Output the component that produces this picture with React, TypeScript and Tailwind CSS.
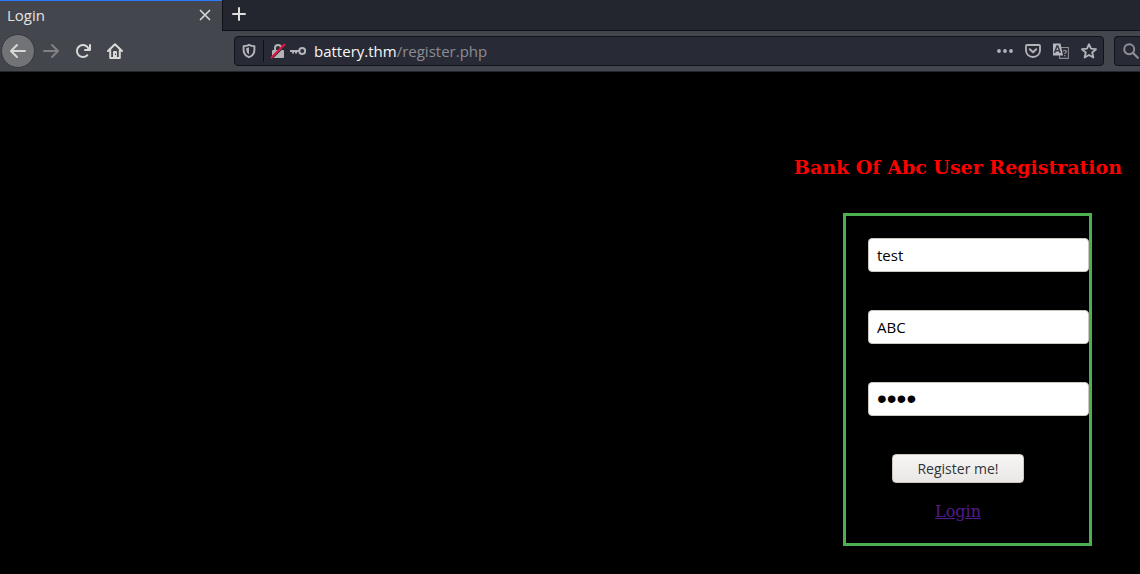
import type { ReactNode } from 'react';

function Icon({ children, className = '' }: { children: ReactNode; className?: string }) {
  return (
    <svg viewBox="0 0 16 16" className={`size-4 shrink-0 ${className}`} fill="currentColor" aria-hidden="true">
      {children}
    </svg>
  );
}

const ARROW_PATH =
  'M15 7H3.414l4.293-4.293a1 1 0 0 0-1.414-1.414l-6 6a1 1 0 0 0 0 1.414l6 6a1 1 0 0 0 1.414-1.414L3.414 9H15a1 1 0 0 0 0-2z';

function TabStrip() {
  return (
    <div className="flex h-[31px] bg-[#23252f]">
      <div className="flex w-[222px] shrink-0 items-center justify-between border-t border-[#2a7bff] bg-[#43464d] pr-[9px] pb-0.5 pl-[7px]">
        <span className="text-[15px] leading-5 text-[#e4e4e2]">Login</span>
        <button type="button" aria-label="Close tab" className="text-[#d6d6d4]">
          <Icon>
            <path d="M3.500 3.500l9 9M12.500 3.500l-9 9" stroke="currentColor" strokeWidth="1.700" strokeLinecap="round" />
          </Icon>
        </button>
      </div>
      <div className="flex flex-1 items-center border-b border-l border-[#111219] pb-0.5 pl-2">
        <button type="button" aria-label="New tab" className="text-[#dededc]">
          <Icon>
            <path d="M8 2v12M2 8h12" stroke="currentColor" strokeWidth="2" strokeLinecap="round" />
          </Icon>
        </button>
      </div>
    </div>
  );
}

function Toolbar() {
  return (
    <div className="flex h-[41px] items-center overflow-hidden border-b border-[#24262b] bg-[#43464d] pl-px text-[#d8d8d6]">
      <button
        type="button"
        aria-label="Back"
        className="grid size-[34px] shrink-0 place-items-center rounded-full border border-[#36383e] bg-[#727376]"
      >
        <Icon>
          <path d={ARROW_PATH} />
        </Icon>
      </button>
      <button type="button" aria-label="Forward" disabled className="grid size-8 shrink-0 place-items-center text-[#808185]">
        <Icon className="rotate-180">
          <path d={ARROW_PATH} />
        </Icon>
      </button>
      <button type="button" aria-label="Reload" className="grid size-8 shrink-0 place-items-center">
        <Icon>
          <path d="M15 1a1 1 0 0 0-1 1v2.418A6.995 6.995 0 1 0 8 15a6.954 6.954 0 0 0 4.950-2.050 1 1 0 0 0-1.414-1.414A5.019 5.019 0 1 1 12.549 6H10a1 1 0 0 0 0 2h5a1 1 0 0 0 1-1V2a1 1 0 0 0-1-1z" />
        </Icon>
      </button>
      <button type="button" aria-label="Home" className="grid size-8 shrink-0 place-items-center">
        <Icon>
          <path d="M1 8L8 1.200 15 8M3.200 7v7.900h9.600V7" fill="none" stroke="currentColor" strokeWidth="2" strokeLinecap="round" strokeLinejoin="round" />
          <path fillRule="evenodd" d="M6 15V9a1 1 0 0 1 1-1h2a1 1 0 0 1 1 1v6zM8 10.500v1.500h1v-1.500z" />
        </Icon>
      </button>

      <div className="ml-[103px] flex h-[30px] min-w-0 flex-1 items-center rounded border border-[#12131a] bg-[#282a36] text-[#b3b4b8]">
        <div className="flex h-[22px] items-center border-r border-[#0f1016] px-1.5">
          <Icon>
            <path
              fill="none"
              stroke="currentColor"
              strokeWidth="1.900"
              strokeLinejoin="round"
              d="M8 1.800c1.800 1 3.500 1.300 5.400 1.300v4c0 3.200-2 5.800-5.400 7.100-3.400-1.300-5.400-3.900-5.400-7.100v-4c1.900 0 3.600-.3 5.400-1.300z"
            />
            <path d="M8 4.300v7.200C6.200 10.300 5.300 8.800 5.300 7V5.100C6.300 5 7.200 4.700 8 4.300z" />
          </Icon>
        </div>
        <Icon className="ml-1.5">
          <path fillRule="evenodd" d="M3 7h1V5a4 4 0 0 1 8 0v2h1a1 1 0 0 1 1 1v6a1 1 0 0 1-1 1H3a1 1 0 0 1-1-1V8a1 1 0 0 1 1-1zm3 0h4V5a2 2 0 0 0-4 0z" />
          <path d="M2.300 15.300l13-13" stroke="#282a36" strokeWidth="1.400" />
          <path d="M1.500 14.500l13-13" stroke="#e8123f" strokeWidth="2" strokeLinecap="round" />
        </Icon>
        <Icon className="ml-1">
          <circle cx="12.200" cy="8" r="2.900" fill="none" stroke="currentColor" strokeWidth="2" />
          <path d="M9.500 7H.7a.7.7 0 0 0-.7.7V9h2v1.500h2V9h1v1.500h2V9h2.500z" />
        </Icon>
        <div className="relative ml-2 h-6 min-w-0 flex-1 text-[15px] leading-6">
          <input
            aria-label="Address"
            defaultValue="battery.thm/register.php"
            className="absolute inset-0 size-full bg-transparent text-transparent outline-none"
          />
          <span aria-hidden="true" className="pointer-events-none relative text-[#8c8d93]">
            <span className="text-[#f8f8f4]">battery.thm</span>/register.php
          </span>
        </div>
        <div className="flex items-center gap-3 pr-1.5">
          <button type="button" aria-label="Page actions">
            <Icon>
              <circle cx="2" cy="8" r="1.900" />
              <circle cx="8" cy="8" r="1.900" />
              <circle cx="14" cy="8" r="1.900" />
            </Icon>
          </button>
          <button type="button" aria-label="Save to Pocket">
            <Icon>
              <path
                d="M2 2h12a1 1 0 0 1 1 1v4.500a7 6.500 0 0 1-14 0V3a1 1 0 0 1 1-1z"
                fill="none"
                stroke="currentColor"
                strokeWidth="1.800"
              />
              <path d="M4.800 6.300L8 9.300l3.200-3" fill="none" stroke="currentColor" strokeWidth="2" strokeLinecap="round" strokeLinejoin="round" />
            </Icon>
          </button>
          <button type="button" aria-label="Translate this page">
            <Icon>
              <path d="M8 4.500h7.400v10.900H6.500V12" fill="none" stroke="#8b8c91" strokeWidth="1.100" />
              <path d="M10.300 8.300c.3-1.300 3-1.300 3 .2 0 1.200-1.500 1.200-1.500 2.500M11.800 12v1.200" fill="none" stroke="#8b8c91" strokeWidth="1.400" />
              <path d="M0 .5h7.500L10 12.500H0z" fill="#b8b9bc" />
              <path d="M1.500 10L4 3h.8l2.500 7M2.500 7.700h4" fill="none" stroke="#383a45" strokeWidth="1.500" />
            </Icon>
          </button>
          <button type="button" aria-label="Bookmark this page">
            <Icon>
              <path
                d="M8 1.200l2 4.500 5 .5-3.800 3.300 1.200 5L8 11.900l-4.400 2.600 1.200-5L1 6.200l5-.5z"
                fill="none"
                stroke="currentColor"
                strokeWidth="1.800"
                strokeLinejoin="round"
              />
            </Icon>
          </button>
        </div>
      </div>
      <div className="ml-2.5 flex h-[30px] w-[26px] shrink-0 items-center rounded-l border border-r-0 border-[#12131a] bg-[#282a36] pl-2 text-[#8f9095]">
        <button type="button" aria-label="Search">
          <Icon>
            <circle cx="6.200" cy="6.200" r="5" fill="none" stroke="currentColor" strokeWidth="1.900" />
            <path d="M9.800 9.800l5 5" stroke="currentColor" strokeWidth="2.200" strokeLinecap="round" />
          </Icon>
        </button>
      </div>
    </div>
  );
}

const fields = [
  { label: 'Username', type: 'text', value: 'test', font: 'text-[15px]' },
  { label: 'Bank name', type: 'text', value: 'ABC', font: 'text-[15px]' },
  { label: 'Password', type: 'password', value: 'pass', font: "font-['Liberation_Sans',sans-serif] text-[28px]" },
];

function RegistrationForm() {
  return (
    <form
      onSubmit={(event) => event.preventDefault()}
      className="mt-[34px] mr-[30px] w-[249px] border-[3px] border-[#4caf50] pt-[22px] pb-5 pl-[22px]"
    >
      <div className="flex flex-col gap-[38px]">
        {fields.map((field) => (
          <input
            key={field.label}
            aria-label={field.label}
            type={field.type}
            defaultValue={field.value}
            className={`block h-[34px] w-full rounded border border-[#cdc7c2] bg-white px-2 text-black outline-none ${field.font}`}
          />
        ))}
      </div>
      <div className="mt-[38px] flex w-[180px] flex-col items-center">
        <button
          type="submit"
          className="h-[29px] w-[132px] rounded border border-[#cdc7c2] bg-linear-to-b from-[#f6f5f4] to-[#e9e8e6] text-sm text-[#2e3436]"
        >
          Register me!
        </button>
        <a href="#login" className="mt-[17px] font-['DejaVu_Serif',serif] text-base leading-[23px] text-[#551a8b] underline">
          Login
        </a>
      </div>
    </form>
  );
}

export default function App() {
  return (
    <div className="flex min-h-screen flex-col bg-black font-['Open_Sans','Noto_Sans',sans-serif]">
      <header>
        <TabStrip />
        <Toolbar />
      </header>
      <main className="flex flex-1 flex-col items-end pt-[83px] pr-[18px] pb-7">
        <h1 className="font-['DejaVu_Serif',serif] text-[19px] leading-6 font-bold text-[#ff0000]">
          Bank Of Abc User Registration
        </h1>
        <RegistrationForm />
      </main>
    </div>
  );
}
